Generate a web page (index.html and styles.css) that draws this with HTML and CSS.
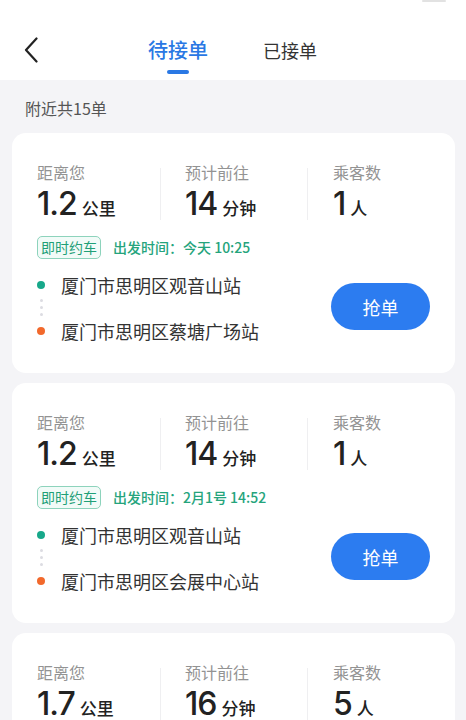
FILE: index.html
```html
<!DOCTYPE html>
<html lang="zh-CN">
<head>
<meta charset="utf-8">
<title>待接单</title>
<link rel="stylesheet" href="styles.css">
</head>
<body>
<div class="page">
  <header class="topbar">
    <div class="statusmark"></div>
    <button class="back" aria-label="返回">
      <svg width="14" height="26" viewBox="0 0 14 26"><path d="M12.5 1.5 L2 13 L12.5 24.5" fill="none" stroke="#222" stroke-width="2.2" stroke-linecap="round" stroke-linejoin="round"/></svg>
    </button>
    <nav class="tabs">
      <div class="tab active"><span class="tab-text">待接单</span><span class="tab-line"></span></div>
      <div class="tab"><span class="tab-text">已接单</span></div>
    </nav>
  </header>

  <div class="count">附近共15单</div>

  <main class="list">
    <section class="card">
      <div class="stats">
        <div class="stat first"><div class="label">距离您</div><div class="value"><span class="num">1.2</span><span class="unit">公里</span></div></div>
        <div class="vdiv"></div>
        <div class="stat second"><div class="label">预计前往</div><div class="value"><span class="num">14</span><span class="unit">分钟</span></div></div>
        <div class="vdiv"></div>
        <div class="stat third"><div class="label">乘客数</div><div class="value"><span class="num">1</span><span class="unit">人</span></div></div>
      </div>
      <div class="meta"><span class="tag">即时约车</span><span class="depart">出发时间：今天 10:25</span></div>
      <div class="route">
        <div class="stops">
          <div class="stop"><span class="dot start"></span><span class="place">厦门市思明区观音山站</span></div>
          <div class="connector"><i></i><i></i><i></i></div>
          <div class="stop"><span class="dot end"></span><span class="place">厦门市思明区蔡塘广场站</span></div>
        </div>
        <button class="grab">抢单</button>
      </div>
    </section>

    <section class="card">
      <div class="stats">
        <div class="stat first"><div class="label">距离您</div><div class="value"><span class="num">1.2</span><span class="unit">公里</span></div></div>
        <div class="vdiv"></div>
        <div class="stat second"><div class="label">预计前往</div><div class="value"><span class="num">14</span><span class="unit">分钟</span></div></div>
        <div class="vdiv"></div>
        <div class="stat third"><div class="label">乘客数</div><div class="value"><span class="num">1</span><span class="unit">人</span></div></div>
      </div>
      <div class="meta"><span class="tag">即时约车</span><span class="depart">出发时间：2月1号 14:52</span></div>
      <div class="route">
        <div class="stops">
          <div class="stop"><span class="dot start"></span><span class="place">厦门市思明区观音山站</span></div>
          <div class="connector"><i></i><i></i><i></i></div>
          <div class="stop"><span class="dot end"></span><span class="place">厦门市思明区会展中心站</span></div>
        </div>
        <button class="grab">抢单</button>
      </div>
    </section>

    <section class="card">
      <div class="stats">
        <div class="stat first"><div class="label">距离您</div><div class="value"><span class="num">1.7</span><span class="unit">公里</span></div></div>
        <div class="vdiv"></div>
        <div class="stat second"><div class="label">预计前往</div><div class="value"><span class="num">16</span><span class="unit">分钟</span></div></div>
        <div class="vdiv"></div>
        <div class="stat third"><div class="label">乘客数</div><div class="value"><span class="num">5</span><span class="unit">人</span></div></div>
      </div>
      <div class="meta"><span class="tag">即时约车</span><span class="depart">出发时间：今天 11:05</span></div>
      <div class="route">
        <div class="stops">
          <div class="stop"><span class="dot start"></span><span class="place">厦门市思明区观音山站</span></div>
          <div class="connector"><i></i><i></i><i></i></div>
          <div class="stop"><span class="dot end"></span><span class="place">厦门市思明区软件园站</span></div>
        </div>
        <button class="grab">抢单</button>
      </div>
    </section>
  </main>
</div>
</body>
</html>
```

FILE: styles.css
```css
* { box-sizing: border-box; }
html, body { margin: 0; padding: 0; }
body {
  background: #f4f4f7;
  font-family: "Noto Sans CJK SC", "Noto Sans", sans-serif;
  color: #222;
  width: 466px;
  overflow: hidden;
}
.page { width: 466px; }

.topbar {
  position: relative;
  height: 80px;
  background: #fff;
  display: flex;
  align-items: flex-start;
  padding: 36px 0 0 24px;
}
.statusmark {
  position: absolute;
  top: 0;
  right: 20px;
  width: 24px;
  height: 2px;
  border-radius: 1px;
  background: #e2e2e2;
}
.back {
  border: 0;
  background: none;
  padding: 0;
  margin-top: 1px;
  width: 14px;
  height: 26px;
  display: block;
}
.back svg { display: block; }
.tabs {
  display: flex;
  align-items: flex-start;
  gap: 55px;
  margin-left: 110px;
}
.tab {
  display: flex;
  flex-direction: column;
  align-items: center;
}
.tab-text {
  font-size: 18px;
  line-height: 28px;
  color: #333;
}
.tab.active .tab-text {
  font-size: 20px;
  color: #2a78e4;
  font-weight: 500;
}
.tab-line {
  margin-top: 6px;
  width: 22px;
  height: 4px;
  border-radius: 2px;
  background: #2a78e4;
}

.count {
  margin: 16px 0 0 25px;
  font-size: 16px;
  line-height: 24px;
  color: #555;
}

.list {
  margin-top: 13px;
  padding: 0 11px 0 12px;
  display: flex;
  flex-direction: column;
  gap: 10px;
}
.card {
  background: #fff;
  border-radius: 14px;
  padding: 28px 25px 29px 25px;
}

.stats {
  display: flex;
  align-items: flex-start;
}
.stat.first { width: 123px; }
.stat.second { width: 122px; margin-left: 24px; }
.stat.third { margin-left: 25px; }
.vdiv {
  width: 1px;
  height: 52px;
  margin-top: 7px;
  background: #efeff1;
}
.label {
  font-size: 16px;
  line-height: 22px;
  color: #939393;
}
.value {
  display: flex;
  align-items: baseline;
  line-height: 42px;
  height: 42px;
}
.num {
  font-family: "Inter", "Roboto", sans-serif;
  font-size: 32px;
  font-weight: 500;
  color: #222;
  letter-spacing: -1px;
}
.unit {
  font-size: 17px;
  font-weight: 500;
  color: #222;
  margin-left: 5px;
}

.meta {
  margin-top: 11px;
  display: flex;
  align-items: center;
  gap: 12px;
}
.tag {
  border: 1px solid #8dd3bc;
  background: #f2fbf8;
  border-radius: 5px;
  padding: 0 3px;
  font-size: 14px;
  line-height: 21px;
  color: #1f9f77;
}
.depart {
  font-size: 14px;
  line-height: 21px;
  color: #25a47c;
  font-weight: 500;
}

.route {
  margin-top: 13px;
  display: flex;
  align-items: center;
}
.stops {
  display: flex;
  flex-direction: column;
}
.stop {
  display: flex;
  align-items: center;
  gap: 16px;
  height: 26px;
}
.dot {
  width: 8px;
  height: 8px;
  border-radius: 50%;
  flex: none;
}
.dot.start { background: #17a88a; }
.dot.end { background: #f2692c; }
.place {
  font-size: 18px;
  line-height: 26px;
  color: #333;
}
.connector {
  height: 20px;
  padding: 1px 0 0 2.5px;
  display: flex;
  flex-direction: column;
  gap: 4px;
}
.connector i {
  display: block;
  width: 3px;
  height: 3px;
  border-radius: 50%;
  background: #dcdce2;
}
.grab {
  margin-left: auto;
  margin-bottom: 3px;
  width: 99px;
  height: 47px;
  border: 0;
  border-radius: 24px;
  background: #2c7cf0;
  color: #fff;
  font-family: "Noto Sans CJK SC", sans-serif;
  font-size: 18px;
  padding: 0;
}
```
